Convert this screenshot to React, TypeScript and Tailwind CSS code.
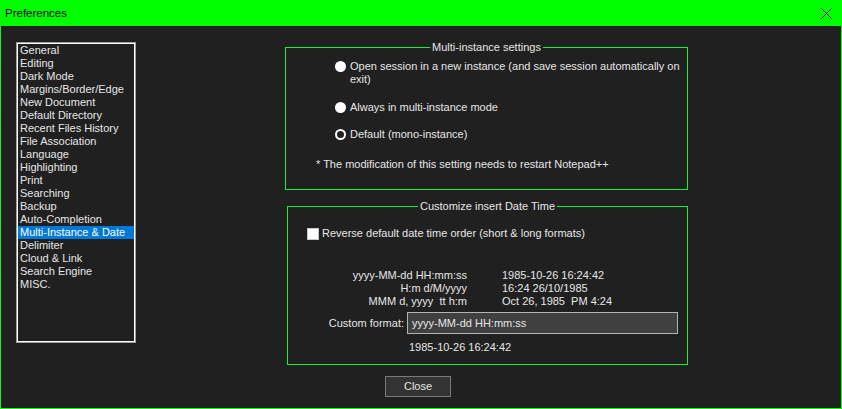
import React from "react";

const items = [
  "General",
  "Editing",
  "Dark Mode",
  "Margins/Border/Edge",
  "New Document",
  "Default Directory",
  "Recent Files History",
  "File Association",
  "Language",
  "Highlighting",
  "Print",
  "Searching",
  "Backup",
  "Auto-Completion",
  "Multi-Instance & Date",
  "Delimiter",
  "Cloud & Link",
  "Search Engine",
  "MISC.",
];

const formats = [
  ["yyyy-MM-dd HH:mm:ss", "1985-10-26 16:24:42"],
  ["H:m d/M/yyyy", "16:24 26/10/1985"],
  ["MMM d, yyyy  tt h:m", "Oct 26, 1985  PM 4:24"],
];

const Radio = ({ checked, children }: { checked?: boolean; children: React.ReactNode }) => (
  <div className="flex items-start gap-[4px]">
    <span
      className={
        checked
          ? "mt-[1px] h-[11px] w-[11px] shrink-0 rounded-full border-[2px] border-white bg-[#202020]"
          : "mt-[1px] h-[11px] w-[11px] shrink-0 rounded-full bg-white"
      }
    />
    <span className="w-[330px]">{children}</span>
  </div>
);

const Group = ({ title, className, children }: { title: string; className: string; children: React.ReactNode }) => (
  <div className={"relative border border-solid border-[#14ee3c] " + className}>
    <div className="absolute -top-[7px] left-0 right-0 flex justify-center">
      <span className="bg-[#202020] px-[2px] leading-[13px] whitespace-nowrap">{title}</span>
    </div>
    {children}
  </div>
);

export default function App() {
  return (
    <div
      className="w-[842px] h-[409px] flex flex-col border border-[#00ff00] border-t-0 bg-[#202020] text-[11px] leading-[13px] text-[#e6e6e6]"
      style={{ fontFamily: '"Liberation Sans", Arial, sans-serif' }}
    >
      <div className="h-[26px] -mx-[1px] bg-[#00ff00] flex items-center justify-between pl-[5px] pr-[10px] text-black text-[11.5px]">
        <span className="mt-[1px]">Preferences</span>
        <svg width="11" height="11" viewBox="0 0 11 11" className="mt-[1px]">
          <path d="M0.5 0.5 L10.5 10.5 M10.5 0.5 L0.5 10.5" stroke="#000" strokeWidth="1" />
        </svg>
      </div>

      <div className="flex flex-1">
        <div className="ml-[15px] mt-[16px] w-[120px] h-[301px] border border-[#a0a0a0]">
          <div className="h-full border border-white flex flex-col">
            {items.map((it) => (
              <div
                key={it}
                className={
                  "h-[13px] px-[2px] whitespace-nowrap " +
                  (it === "Multi-Instance & Date" ? "bg-[#0078d7] text-white" : "")
                }
              >
                {it}
              </div>
            ))}
          </div>
        </div>

        <div className="ml-[149px] mt-[21px] flex flex-col">
          <Group title="Multi-instance settings" className="w-[403px] h-[143px] pl-[30px] pt-[12px]">
            <div className="pl-[19px] flex flex-col">
              <Radio>Open session in a new instance (and save session automatically on exit)</Radio>
              <div className="mt-[15px]">
                <Radio>Always in multi-instance mode</Radio>
              </div>
              <div className="mt-[14px]">
                <Radio checked>Default (mono-instance)</Radio>
              </div>
            </div>
            <div className="mt-[17px]">* The modification of this setting needs to restart Notepad++</div>
          </Group>

          <Group title="Customize insert Date Time" className="ml-[2px] mt-[16px] w-[401px] h-[159px] pl-[19px] pt-[20px]">
            <div className="flex items-center gap-[3px]">
              <span className="h-[12px] w-[12px] border border-[#c8c8c8] bg-white" />
              <span>Reverse default date time order (short &amp; long formats)</span>
            </div>
            <div className="mt-[29px] flex flex-col">
              {formats.map(([f, v]) => (
                <div key={f} className="flex h-[13px]">
                  <span className="w-[160px] text-right whitespace-pre">{f}</span>
                  <span className="ml-[35px] whitespace-pre">{v}</span>
                </div>
              ))}
            </div>
            <div className="mt-[4px] flex items-center gap-[3px]">
              <span className="w-[97px] text-right">Custom format:</span>
              <div className="w-[271px] h-[22px] border border-[#b4b4b4] bg-[#404040] flex items-center pl-[4px]">
                yyyy-MM-dd HH:mm:ss
              </div>
            </div>
            <div className="mt-[7px] pl-[102px]">1985-10-26 16:24:42</div>
          </Group>

          <button className="mt-[11px] ml-[100px] w-[66px] h-[21px] border border-[#7a7a7a] bg-[#333333] text-[#e6e6e6] text-[11px] leading-[13px]">
            Close
          </button>
        </div>
      </div>
    </div>
  );
}
